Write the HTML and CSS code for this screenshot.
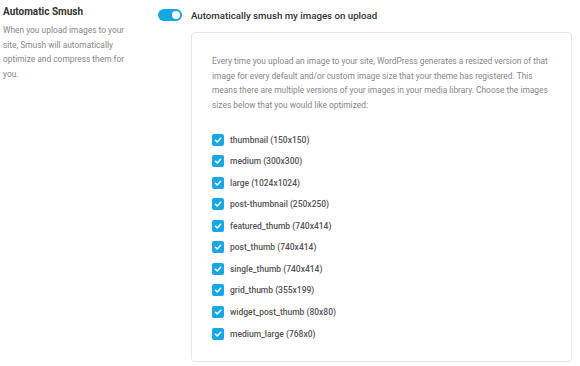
FILE: index.html
```html
<!DOCTYPE html>
<html>
<head>
<meta charset="utf-8">
<link rel="stylesheet" href="styles.css">
</head>
<body>
<div class="row">
  <div class="side">
    <div class="title">Automatic Smush</div>
    <p class="desc">When you upload images to your site, Smush will automatically optimize and compress them for you.</p>
  </div>
  <div class="main">
    <div class="toggle-row">
      <span class="toggle"><span class="knob"></span></span>
      <span class="toggle-label">Automatically smush my images on upload</span>
    </div>
    <div class="box">
      <p class="intro">Every time you upload an image to your site, WordPress generates a resized version of that image for every default and/or custom image size that your theme has registered. This means there are multiple versions of your images in your media library. Choose the images sizes below that you would like optimized:</p>
      <ul class="list">
        <li><span class="cb"><svg viewBox="0 0 12 12" width="12" height="12"><path d="M3.4 6.2 L5.2 7.9 L8.7 4.3" fill="none" stroke="#fff" stroke-width="1.5" stroke-linecap="round" stroke-linejoin="round"/></svg></span>thumbnail (150x150)</li>
        <li><span class="cb"><svg viewBox="0 0 12 12" width="12" height="12"><path d="M3.4 6.2 L5.2 7.9 L8.7 4.3" fill="none" stroke="#fff" stroke-width="1.5" stroke-linecap="round" stroke-linejoin="round"/></svg></span>medium (300x300)</li>
        <li><span class="cb"><svg viewBox="0 0 12 12" width="12" height="12"><path d="M3.4 6.2 L5.2 7.9 L8.7 4.3" fill="none" stroke="#fff" stroke-width="1.5" stroke-linecap="round" stroke-linejoin="round"/></svg></span>large (1024x1024)</li>
        <li><span class="cb"><svg viewBox="0 0 12 12" width="12" height="12"><path d="M3.4 6.2 L5.2 7.9 L8.7 4.3" fill="none" stroke="#fff" stroke-width="1.5" stroke-linecap="round" stroke-linejoin="round"/></svg></span>post-thumbnail (250x250)</li>
        <li><span class="cb"><svg viewBox="0 0 12 12" width="12" height="12"><path d="M3.4 6.2 L5.2 7.9 L8.7 4.3" fill="none" stroke="#fff" stroke-width="1.5" stroke-linecap="round" stroke-linejoin="round"/></svg></span>featured_thumb (740x414)</li>
        <li><span class="cb"><svg viewBox="0 0 12 12" width="12" height="12"><path d="M3.4 6.2 L5.2 7.9 L8.7 4.3" fill="none" stroke="#fff" stroke-width="1.5" stroke-linecap="round" stroke-linejoin="round"/></svg></span>post_thumb (740x414)</li>
        <li><span class="cb"><svg viewBox="0 0 12 12" width="12" height="12"><path d="M3.4 6.2 L5.2 7.9 L8.7 4.3" fill="none" stroke="#fff" stroke-width="1.5" stroke-linecap="round" stroke-linejoin="round"/></svg></span>single_thumb (740x414)</li>
        <li><span class="cb"><svg viewBox="0 0 12 12" width="12" height="12"><path d="M3.4 6.2 L5.2 7.9 L8.7 4.3" fill="none" stroke="#fff" stroke-width="1.5" stroke-linecap="round" stroke-linejoin="round"/></svg></span>grid_thumb (355x199)</li>
        <li><span class="cb"><svg viewBox="0 0 12 12" width="12" height="12"><path d="M3.4 6.2 L5.2 7.9 L8.7 4.3" fill="none" stroke="#fff" stroke-width="1.5" stroke-linecap="round" stroke-linejoin="round"/></svg></span>widget_post_thumb (80x80)</li>
        <li><span class="cb"><svg viewBox="0 0 12 12" width="12" height="12"><path d="M3.4 6.2 L5.2 7.9 L8.7 4.3" fill="none" stroke="#fff" stroke-width="1.5" stroke-linecap="round" stroke-linejoin="round"/></svg></span>medium_large (768x0)</li>
      </ul>
    </div>
  </div>
</div>
</body>
</html>
```
FILE: styles.css
```css
html, body {
  margin: 0;
  padding: 0;
  background: #fff;
}
body {
  font-family: Roboto, "Liberation Sans", sans-serif;
  color: #333;
}
.row {
  display: flex;
  padding: 4px 8px 0 3px;
}
.side {
  width: 130px;
  margin-right: 25px;
  flex: none;
}
.title {
  font-size: 10px;
  font-weight: 700;
  color: #333;
  line-height: 16px;
}
.desc {
  margin: 3px 0 0;
  font-size: 8.4px;
  line-height: 14.5px;
  color: #888;
}
.main {
  flex: 1;
  display: flex;
  flex-direction: column;
}
.toggle-row {
  display: flex;
  align-items: center;
  height: 22px;
}
.toggle {
  position: relative;
  width: 24px;
  height: 12px;
  border-radius: 6px;
  background: #17a8e3;
  flex: none;
}
.knob {
  position: absolute;
  right: 2px;
  top: 2px;
  width: 8px;
  height: 8px;
  border-radius: 50%;
  background: #fff;
}
.toggle-label {
  margin-left: 9px;
  font-size: 9.7px;
  font-weight: 500;
  color: #333;
}
.box {
  margin: 6px 0 0 33px;
  border: 1px solid #e6e6e6;
  border-radius: 4px;
  padding: 21px 20px 0 20px;
  height: 307px;
}
.intro {
  margin: 0;
  font-size: 8.4px;
  line-height: 14.7px;
  color: #888;
}
.list {
  list-style: none;
  margin: 16px 0 0;
  padding: 0;
}
.list li {
  display: flex;
  align-items: center;
  height: 21.55px;
  font-size: 8.5px;
  font-weight: 500;
  color: #555;
}
.cb {
  width: 12px;
  height: 12px;
  border-radius: 2px;
  background: #17a8e3;
  margin-right: 6px;
  display: flex;
  flex: none;
}
```
